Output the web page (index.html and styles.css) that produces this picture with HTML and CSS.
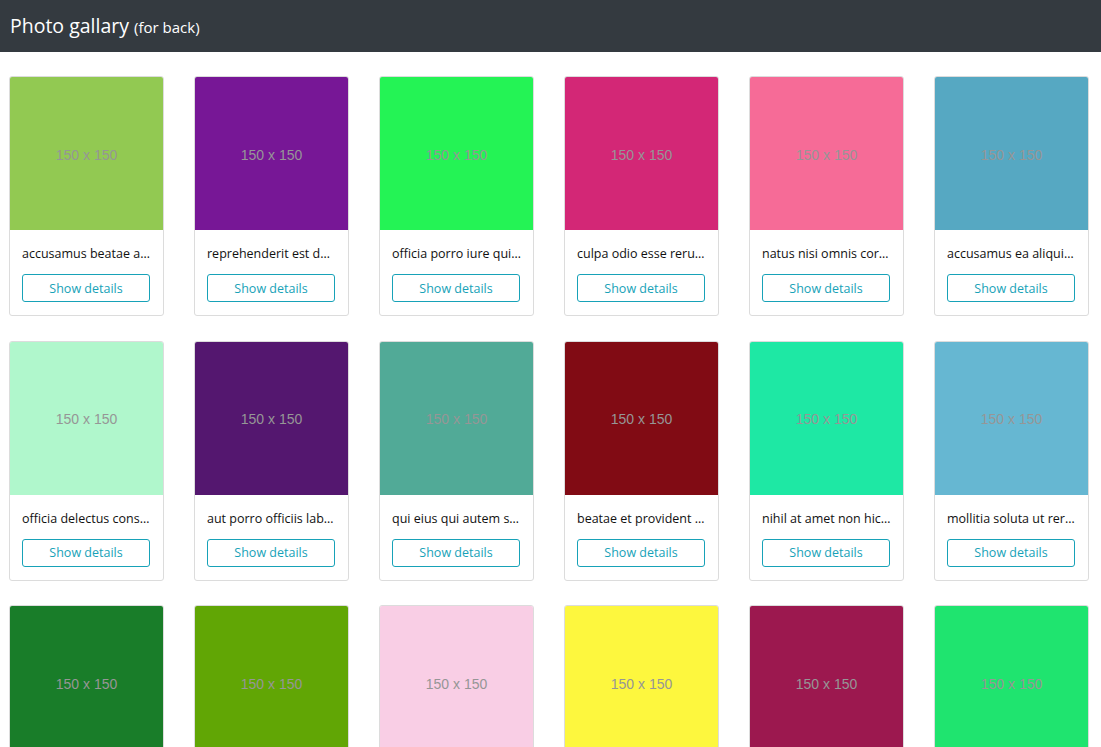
FILE: index.html
```html
<!DOCTYPE html>
<html lang="en">
<head>
<meta charset="utf-8">
<title>Photo gallary</title>
<link rel="stylesheet" href="styles.css">
</head>
<body>
<header class="topbar">
  <h1 class="brand">Photo gallary <small class="brand-sub">(for back)</small></h1>
</header>
<main class="gallery">
  <div class="card"><div class="thumb" style="background:#92c952">150 x 150</div><div class="card-body"><p class="card-title">accusamus beatae ad facilis cum similique qui sunt</p><button class="btn">Show details</button></div></div>
  <div class="card"><div class="thumb" style="background:#771796">150 x 150</div><div class="card-body"><p class="card-title">reprehenderit est deserunt velit ipsam</p><button class="btn">Show details</button></div></div>
  <div class="card"><div class="thumb" style="background:#24f355">150 x 150</div><div class="card-body"><p class="card-title">officia porro iure quia iusto qui ipsa ut modi</p><button class="btn">Show details</button></div></div>
  <div class="card"><div class="thumb" style="background:#d32776">150 x 150</div><div class="card-body"><p class="card-title">culpa odio esse rerum omnis laboriosam voluptate repudiandae</p><button class="btn">Show details</button></div></div>
  <div class="card"><div class="thumb" style="background:#f66b97">150 x 150</div><div class="card-body"><p class="card-title">natus nisi omnis corporis facere molestiae rerum in</p><button class="btn">Show details</button></div></div>
  <div class="card"><div class="thumb" style="background:#56a8c2">150 x 150</div><div class="card-body"><p class="card-title">accusamus ea aliquid et amet sequi nemo</p><button class="btn">Show details</button></div></div>
  <div class="card"><div class="thumb" style="background:#b0f7cc">150 x 150</div><div class="card-body"><p class="card-title">officia delectus consequatur vero aut veniam explicabo molestias</p><button class="btn">Show details</button></div></div>
  <div class="card"><div class="thumb" style="background:#54176f">150 x 150</div><div class="card-body"><p class="card-title">aut porro officiis laborum odit ea laudantium corporis</p><button class="btn">Show details</button></div></div>
  <div class="card"><div class="thumb" style="background:#51aa97">150 x 150</div><div class="card-body"><p class="card-title">qui eius qui autem sed</p><button class="btn">Show details</button></div></div>
  <div class="card"><div class="thumb" style="background:#810b14">150 x 150</div><div class="card-body"><p class="card-title">beatae et provident et ut vel</p><button class="btn">Show details</button></div></div>
  <div class="card"><div class="thumb" style="background:#1ee8a4">150 x 150</div><div class="card-body"><p class="card-title">nihil at amet non hic quia qui</p><button class="btn">Show details</button></div></div>
  <div class="card"><div class="thumb" style="background:#66b7d2">150 x 150</div><div class="card-body"><p class="card-title">mollitia soluta ut rerum eos aliquam consequatur perspiciatis maiores</p><button class="btn">Show details</button></div></div>
  <div class="card"><div class="thumb" style="background:#197d29">150 x 150</div><div class="card-body"><p class="card-title">repudiandae iusto deleniti rerum</p><button class="btn">Show details</button></div></div>
  <div class="card"><div class="thumb" style="background:#61a605">150 x 150</div><div class="card-body"><p class="card-title">est necessitatibus architecto ut laborum</p><button class="btn">Show details</button></div></div>
  <div class="card"><div class="thumb" style="background:#f9cee5">150 x 150</div><div class="card-body"><p class="card-title">harum dicta similique quis dolore earum ex qui</p><button class="btn">Show details</button></div></div>
  <div class="card"><div class="thumb" style="background:#fdf73e">150 x 150</div><div class="card-body"><p class="card-title">iusto sunt nobis quasi veritatis quas expedita voluptatum deserunt</p><button class="btn">Show details</button></div></div>
  <div class="card"><div class="thumb" style="background:#9c184f">150 x 150</div><div class="card-body"><p class="card-title">natus doloribus necessitatibus ipsa</p><button class="btn">Show details</button></div></div>
  <div class="card"><div class="thumb" style="background:#1fe46f">150 x 150</div><div class="card-body"><p class="card-title">laboriosam odit nam necessitatibus et illum dolores reiciendis</p><button class="btn">Show details</button></div></div>
</main>
</body>
</html>
```

FILE: styles.css
```css
* { box-sizing: border-box; }
html, body { margin: 0; padding: 0; }
body {
  font-family: "Open Sans", "Noto Sans", sans-serif;
  color: #212529;
  background: #fff;
}
.topbar {
  background: #343a40;
  height: 52px;
  display: flex;
  align-items: center;
  padding: 0 10px;
}
.brand {
  margin: 0;
  color: #fff;
  font-size: 19.5px;
  font-weight: 400;
  line-height: 1;
}
.brand-sub { font-size: 15px; }
.gallery {
  display: grid;
  grid-template-columns: repeat(6, 155px);
  column-gap: 30px;
  row-gap: 24.5px;
  padding: 24px 9px;
}
.card {
  border: 1px solid #dcdcdc;
  border-radius: 3px;
  overflow: hidden;
  background: #fff;
}
.thumb {
  height: 153px;
  padding-top: 2px;
  display: flex;
  align-items: center;
  justify-content: center;
  color: #969696;
  font-family: "Liberation Sans", Arial, sans-serif;
  font-size: 14px;
}
.card-body {
  padding: 15px 12px 13px;
}
.card-title {
  margin: 0 0 12px;
  font-size: 12.5px;
  line-height: 17px;
  white-space: nowrap;
  overflow: hidden;
  text-overflow: ellipsis;
  color: #111;
}
.btn {
  display: block;
  width: 128px;
  height: 28px;
  border: 1px solid #17a2b8;
  border-radius: 3px;
  background: #fff;
  color: #17a2b8;
  font-family: inherit;
  font-size: 12.5px;
  padding: 0;
  cursor: pointer;
}
```
